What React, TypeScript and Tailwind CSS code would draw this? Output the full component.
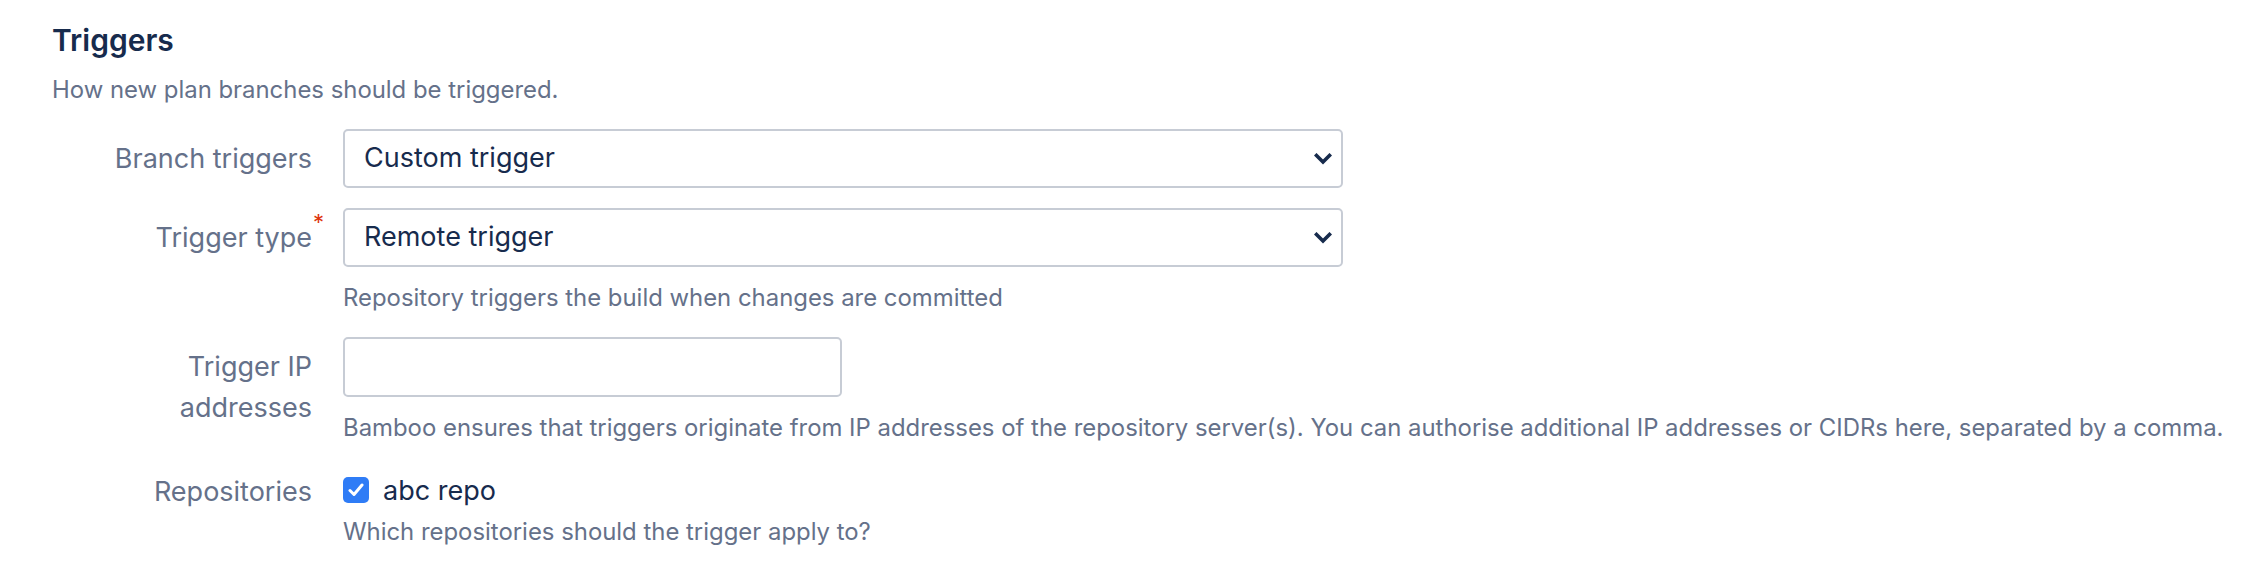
import React from "react";

const font = { fontFamily: "Inter, 'Liberation Sans', sans-serif" };

function Chevron() {
  return (
    <svg width="18" height="12" viewBox="0 0 18 12" fill="none">
      <path d="M2.5 2.5 L9 9 L15.5 2.5" stroke="#172B4D" strokeWidth="3.6" strokeLinecap="square" />
    </svg>
  );
}

function Label({ children, required }: { children: React.ReactNode; required?: boolean }) {
  return (
    <div className="w-[312px] shrink-0 text-right text-[27px] leading-[41px] text-[#65718A] pt-[9px]">
      <span className="relative">
        {children}
        {required && (
          <span className="absolute -right-[12px] -top-[10px] text-[22px] leading-[22px] text-[#DE350B]">*</span>
        )}
      </span>
    </div>
  );
}

function Select({ value }: { value: string }) {
  return (
    <div className="flex h-[59px] w-[1000px] items-center justify-between rounded-[5px] border-2 border-[#C7CCD5] bg-white pl-[19px] pr-[9px]">
      <span className="text-[27px] text-[#172B4D]">{value}</span>
      <Chevron />
    </div>
  );
}

function Help({ children }: { children: React.ReactNode }) {
  return <div className="mt-[16px] text-[23.9px] leading-[30px] text-[#65718A]">{children}</div>;
}

export default function App() {
  return (
    <div className="min-h-[576px] w-[2266px] bg-white pl-[52px] pt-[20px]" style={font}>
      <h2 className="text-[30px] font-semibold leading-[40px] text-[#172B4D]">Triggers</h2>
      <p className="mt-[15px] text-[23.9px] leading-[30px] text-[#65718A]">How new plan branches should be triggered.</p>

      <div className="-ml-[52px] mt-[24px] flex flex-col">
        <div className="flex">
          <Label>Branch triggers</Label>
          <div className="ml-[31px]">
            <Select value="Custom trigger" />
          </div>
        </div>

        <div className="mt-[20px] flex">
          <Label required>Trigger type</Label>
          <div className="ml-[31px]">
            <Select value="Remote trigger" />
            <Help>Repository triggers the build when changes are committed</Help>
          </div>
        </div>

        <div className="mt-[24px] flex">
          <Label>
            Trigger IP
            <br />
            addresses
          </Label>
          <div className="ml-[31px]">
            <div className="h-[60px] w-[499px] rounded-[5px] border-2 border-[#C7CCD5] bg-white" />
            <Help>
              Bamboo ensures that triggers originate from IP addresses of the repository server(s). You can authorise additional IP addresses or CIDRs here, separated by a comma.
            </Help>
          </div>
        </div>

        <div className="mt-[19px] flex">
          <Label>Repositories</Label>
          <div className="ml-[31px] pt-[9px]">
            <div className="flex h-[41px] items-center gap-[14px]">
              <div className="flex h-[26px] w-[26px] items-center justify-center rounded-[5px] bg-[#2F7CF6] -mt-[4px]">
                <svg width="16" height="14" viewBox="0 0 16 14" fill="none">
                  <path d="M2 7.5 L6 11.5 L14 2" stroke="white" strokeWidth="3" strokeLinecap="round" strokeLinejoin="round" />
                </svg>
              </div>
              <span className="text-[27px] text-[#172B4D]">abc repo</span>
            </div>
            <div className="mt-[5px] text-[23.9px] leading-[30px] text-[#65718A]">Which repositories should the trigger apply to?</div>
          </div>
        </div>
      </div>
    </div>
  );
}
